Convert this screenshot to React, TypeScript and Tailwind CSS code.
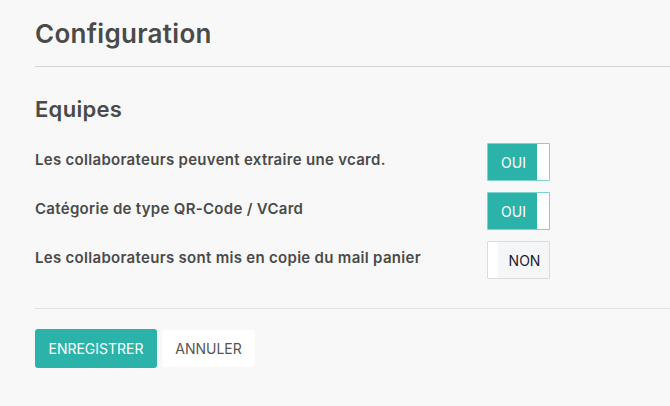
import React, { useState } from 'react'

interface SettingRow {
  id: string
  label: string
  enabled: boolean
}

const initialRows: SettingRow[] = [
  { id: 'vcard', label: 'Les collaborateurs peuvent extraire une vcard.', enabled: true },
  { id: 'qrcode', label: 'Catégorie de type QR-Code / VCard', enabled: true },
  { id: 'copie', label: 'Les collaborateurs sont mis en copie du mail panier', enabled: false },
]

const Toggle: React.FC<{ on: boolean; onClick: () => void }> = ({ on, onClick }) => {
  if (on) {
    return (
      <button
        onClick={onClick}
        className="flex h-[38px] w-[63px] border border-[#7fd3cd] bg-[#2bb3aa] rounded-[1px] overflow-hidden"
      >
        <span className="flex-1 flex items-center justify-center text-[14px] text-white pl-[2px]">OUI</span>
        <span className="w-[12px] h-full bg-white" />
      </button>
    )
  }
  return (
    <button
      onClick={onClick}
      className="flex h-[38px] w-[63px] border border-[#dcdcdc] bg-[#f5f6f8] rounded-[1px] overflow-hidden"
    >
      <span className="w-[10px] h-full bg-white" />
      <span className="flex-1 flex items-center justify-center text-[14px] text-[#1a1a2a] pl-[2px]">NON</span>
    </button>
  )
}

const App: React.FC = () => {
  const [rows, setRows] = useState<SettingRow[]>(initialRows)

  const toggle = (id: string) => {
    setRows(rows.map(r => (r.id === id ? { ...r, enabled: !r.enabled } : r)))
  }

  return (
    <div
      className="min-h-[406px] w-full bg-[#f8f8f8] pl-[35px] text-[#4d4d4d]"
      style={{ fontFamily: 'Inter, "Noto Sans", sans-serif' }}
    >
      <h1 className="pt-[14px] h-[66px] text-[26px] font-semibold tracking-[0.3px] text-[#4a4a4a]">Configuration</h1>
      <div className="border-t border-[#d5d5d5]" />

      <h2 className="pt-[27px] text-[22px] font-semibold tracking-[0.3px] text-[#4a4a4a] leading-[30px]">Equipes</h2>

      <div className="mt-[19px] flex flex-col gap-[11px]">
        {rows.map(row => (
          <div key={row.id} className="flex items-center">
            <div className="w-[452px] text-[15px] font-semibold tracking-[0.3px] text-[#4a4a4a] -mt-[4px]">{row.label}</div>
            <Toggle on={row.enabled} onClick={() => toggle(row.id)} />
          </div>
        ))}
      </div>

      <div className="mt-[29px] border-t border-[#e2e2e2]" />

      <div className="mt-[20px] flex gap-[5px]">
        <button className="h-[39px] w-[122px] rounded-[3px] bg-[#2bb3aa] text-white text-[14px]">ENREGISTRER</button>
        <button className="h-[37px] w-[93px] mt-[1px] rounded-[3px] bg-white text-[#555] text-[14px]">ANNULER</button>
      </div>
    </div>
  )
}

export default App
